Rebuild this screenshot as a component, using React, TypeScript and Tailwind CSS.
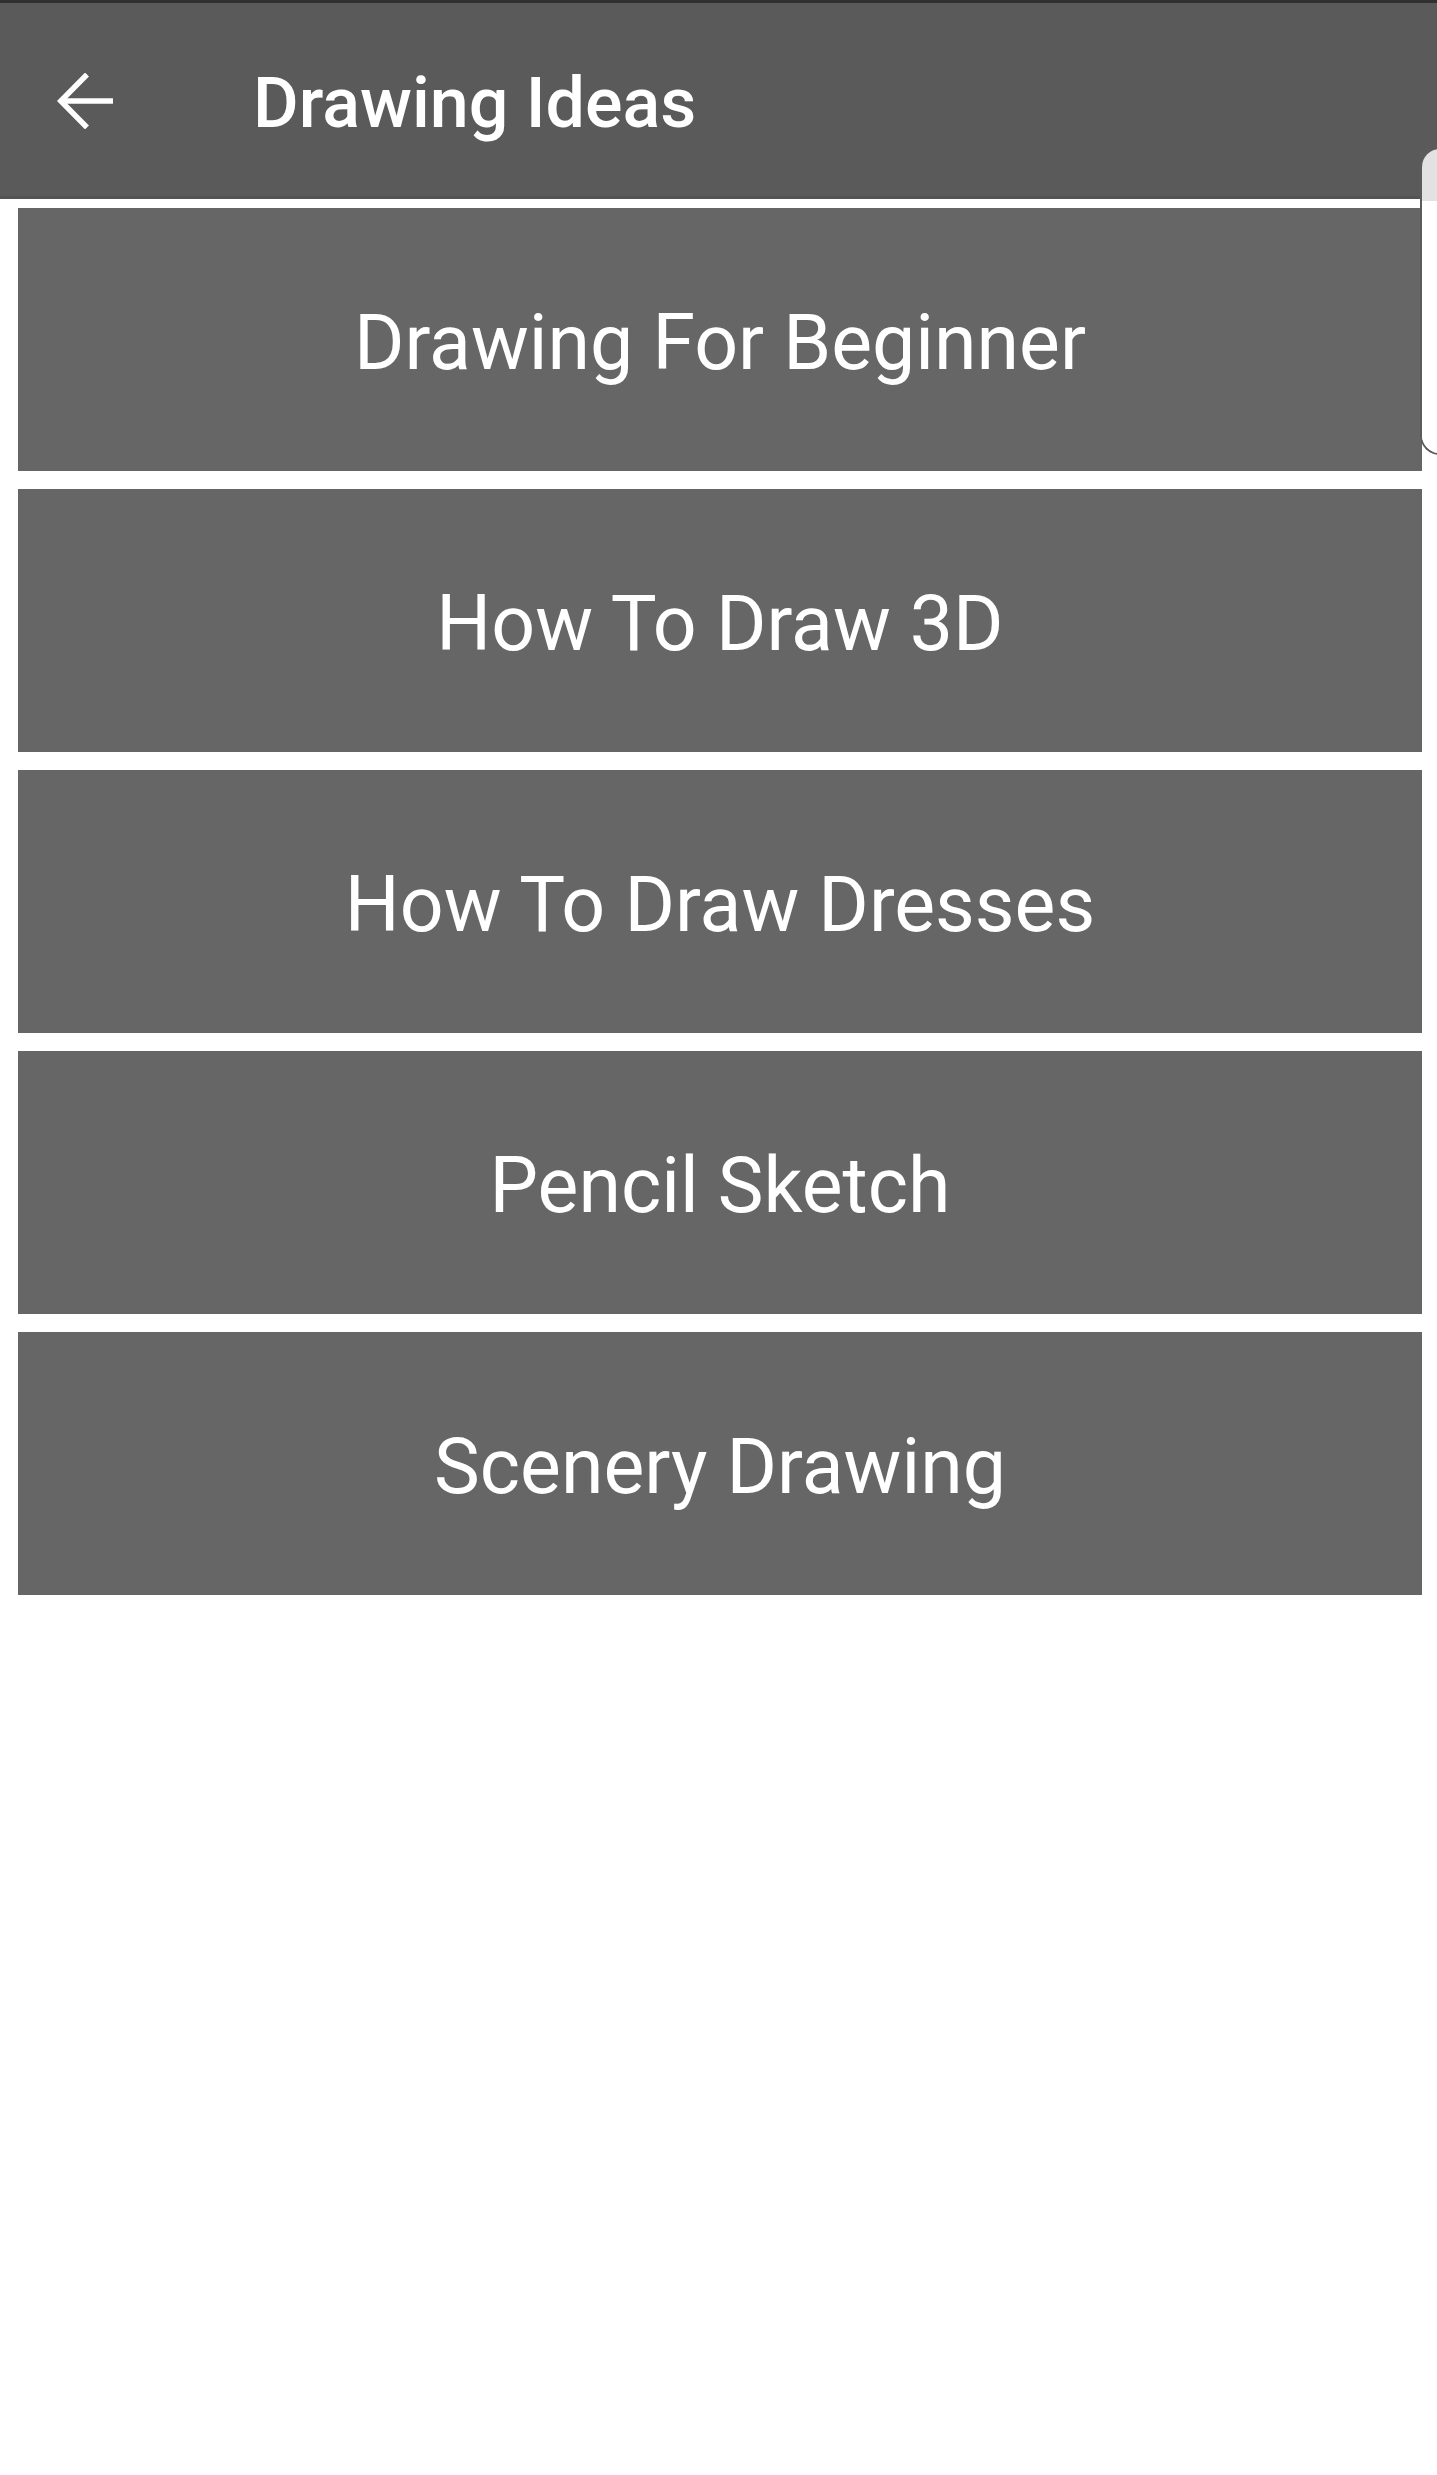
const items = [
  "Drawing For Beginner",
  "How To Draw 3D",
  "How To Draw Dresses",
  "Pencil Sketch",
  "Scenery Drawing",
];

function BackArrow() {
  return (
    <svg width="56" height="56" viewBox="0 0 56 56" fill="none" className="shrink-0">
      <path d="M56 28H4" stroke="white" strokeWidth="5.5" />
      <path d="M30 1.5L3.8 28L30 54.5" stroke="white" strokeWidth="5.5" strokeLinejoin="miter" />
    </svg>
  );
}

export default function App() {
  return (
    <div className="relative w-[1437px] h-[2475px] bg-white overflow-hidden font-['Roboto',sans-serif]">
      <div className="h-[3px] bg-[#303030]" />
      <header className="h-[196px] bg-[#5a5a5a] border-b-[3px] border-[#535353] flex items-center pl-[57px]">
        <div className="pt-[2px]">
          <BackArrow />
        </div>
        <h1 className="ml-[140px] pt-[8px] text-white text-[70px] font-medium">Drawing Ideas</h1>
      </header>

      <div className="flex flex-col gap-[18px] pt-[9px] pl-[18px] pr-[15px]">
        {items.map((label) => (
          <div
            key={label}
            className="h-[263px] bg-[#666666] flex items-center justify-center pt-[9px] text-white text-[77px]"
          >
            {label}
          </div>
        ))}
      </div>

      {/* edge panel handle */}
      <div className="absolute left-[1420px] top-[147px] w-[40px] h-[308px] rounded-l-[20px] border-l-2 border-y-2 border-[#5c5c5c] overflow-hidden flex flex-col">
        <div className="h-[52px] bg-[#e2e2e2]" />
        <div className="flex-1 bg-white" />
      </div>
    </div>
  );
}
